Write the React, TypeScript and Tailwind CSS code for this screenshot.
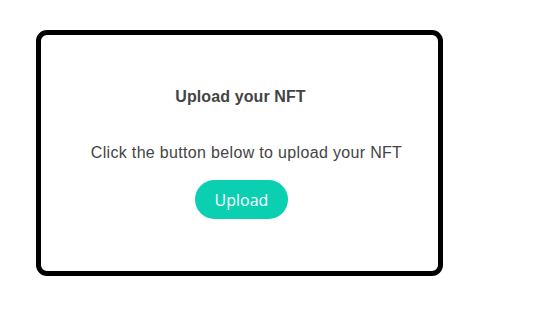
export default function App() {
  return (
    <div className="min-h-screen bg-white pl-[36px] pt-[30px]">
      <div className="flex h-[246px] w-[407px] flex-col items-center rounded-[11px] border-[5px] border-black pt-[53px] font-['Liberation_Sans',Arial,sans-serif] text-[#444]">
        <h2 className="ml-[2px] text-[16px] font-bold leading-[18px] tracking-[0.1px]">Upload your NFT</h2>
        <p className="mt-[38px] ml-[14px] text-[16px] leading-[18px] tracking-[0.33px]">
          Click the button below to upload your NFT
        </p>
        <button
          type="button"
          className="mt-[18px] ml-[4px] h-[39px] w-[93px] rounded-full bg-[#0bcfb1] font-['Open_Sans',sans-serif] text-[16px] text-white"
        >
          Upload
        </button>
      </div>
    </div>
  );
}
